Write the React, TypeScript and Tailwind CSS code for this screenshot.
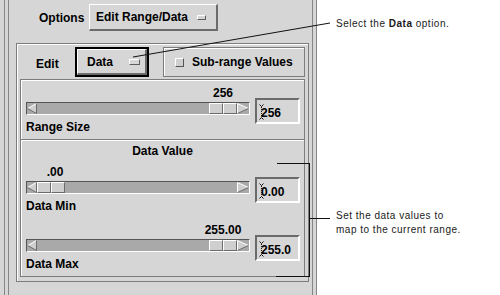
import React from 'react';

type SliderProps = {
  value: string;
  name: string;
  field: string;
  atMax?: boolean;
};

const Cursor = () => (
  <svg className="absolute left-[2px] top-[4px]" width="5" height="16" viewBox="0 0 5 16">
    <path d="M0.5 0.5 L2.5 2.5 L4.5 0.5" fill="none" stroke="#111" strokeWidth="1" />
    <path d="M2.5 3 V13" stroke="#111" strokeWidth="1" strokeDasharray="1 1" />
    <path d="M0.5 15.5 L2.5 13.5 L4.5 15.5" fill="none" stroke="#111" strokeWidth="1" />
  </svg>
);

const LeftArrow = () => (
  <svg width="10" height="11" viewBox="0 0 10 11" className="shrink-0">
    <polygon points="0.5,5.5 9.5,0.5 9.5,10.5" fill="#cfcfcf" />
    <path d="M9.5 0.5 L0.5 5.5" stroke="#ffffff" strokeWidth="1" />
    <path d="M0.5 5.5 L9.5 10.5 V0.5" fill="none" stroke="#6b6b6b" strokeWidth="1" />
  </svg>
);

const RightArrow = () => (
  <svg width="12" height="11" viewBox="0 0 12 11" className="shrink-0">
    <polygon points="0.5,0.5 11.5,5.5 0.5,10.5" fill="#cfcfcf" />
    <path d="M0.5 10.5 V0.5 L11.5 5.5" fill="none" stroke="#ffffff" strokeWidth="1" />
    <path d="M11.5 5.5 L0.5 10.5" stroke="#6b6b6b" strokeWidth="1" />
  </svg>
);

const Thumb = () => (
  <div className="flex shrink-0 h-full">
    <div className="w-[14px] h-full bg-[#cfcfcf] border border-t-white border-l-white border-b-[#6b6b6b] border-r-[#6b6b6b]" />
    <div className="w-[14px] h-full bg-[#cfcfcf] border border-t-white border-l-white border-b-[#6b6b6b] border-r-[#6b6b6b]" />
  </div>
);

const Slider: React.FC<SliderProps> = ({ value, name, field, atMax = false }) => (
  <div className="flex items-start pl-[5px]">
    <div className="w-[224px]">
      <div className={`flex h-[14px] leading-[14px] ${atMax ? 'justify-end' : 'justify-start'}`}>
        <span className={atMax ? 'w-[54px] text-center' : 'w-[58px] text-center'}>{value}</span>
      </div>
      <div className="mt-[2px] h-[13px] flex bg-[#a9a9a9] border border-t-[#555555] border-l-[#555555] border-b-white border-r-white">
        <LeftArrow />
        {atMax && <div className="flex-1" />}
        <Thumb />
        {!atMax && <div className="flex-1" />}
        <RightArrow />
      </div>
      <div className="mt-[5px] h-[14px] leading-[14px]">{name}</div>
    </div>
    <div className="relative ml-[5px] mt-[12px] w-[45px] h-[26px] flex items-center pl-[4px] border-2 border-t-[#6b6b6b] border-l-[#6b6b6b] border-b-white border-r-white">
      <Cursor />
      <span className="mt-[3px] leading-[14px]">{field}</span>
    </div>
  </div>
);

export default function App() {
  return (
    <div className="relative flex w-[500px] h-[295px] bg-white overflow-hidden font-['Liberation_Sans',Arial,sans-serif] text-black">
      <div className="w-[317px] h-full shrink-0 bg-[#d6d6d6] pl-[4px]">
        <div className="w-[313px] h-full border-x border-[#858585] px-[3px]">
          <div className="h-full border-x border-[#858585] text-[12px] font-bold">
            <div className="flex items-center pt-[4px]">
              <div className="w-[80px] pl-[30px] leading-[14px]">Options</div>
              <div className="w-[129px] h-[27px] flex items-center justify-between pl-[6px] pr-[10px] border-t border-l border-t-white border-l-white border-b-2 border-r-2 border-b-[#6b6b6b] border-r-[#6b6b6b]">
                <span className="leading-[14px]">Edit Range/Data</span>
                <div className="w-[9px] h-[5px] border border-t-white border-l-white border-b-[#5e5e5e] border-r-[#5e5e5e]" />
              </div>
            </div>

            <div className="ml-[7px] mt-[12px] w-[293px] px-[3px] pb-[4px] border border-[#7c7c7c] shadow-[inset_1px_1px_0_#ffffff]">
              <div className="flex h-[30px] mt-[3px] -ml-[3px]">
                <div className="w-[58px] pl-[19px] pt-[3px] flex items-center leading-[14px]">Edit</div>
                <div className="w-[74px] h-full border-2 border-black">
                  <div className="h-full flex items-center justify-between pl-[9px] pr-[5px] border-t border-l border-t-white border-l-white border-b-2 border-r-2 border-b-[#6b6b6b] border-r-[#6b6b6b]">
                    <span className="leading-[14px]">Data</span>
                    <div className="w-[11px] h-[6px] border border-t-white border-l-white border-b-[#5e5e5e] border-r-[#5e5e5e]" />
                  </div>
                </div>
                <div className="ml-[14px] w-[142px] h-full flex items-center pl-[11px] border border-[#7c7c7c] shadow-[inset_1px_1px_0_#ffffff]">
                  <div className="w-[9px] h-[9px] bg-[#cfcfcf] border border-t-white border-l-white border-b-[#555555] border-r-[#555555]" />
                  <span className="ml-[8px] leading-[14px]">Sub-range Values</span>
                </div>
              </div>

              <div className="mt-[2px] w-[285px] border border-[#7c7c7c] shadow-[inset_1px_1px_0_#ffffff]">
                <div className="pt-[6px] pb-[5px]">
                  <Slider value="256" name="Range Size" field="256" atMax />
                </div>
                <div className="h-px bg-[#7c7c7c]" />
                <div className="h-px bg-white" />
                <div className="pt-[3px] pb-[5px]">
                  <div className="h-[14px] leading-[14px] text-center">Data Value</div>
                  <div className="mt-[7px]">
                    <Slider value=".00" name="Data Min" field="0.00" />
                  </div>
                  <div className="mt-[10px]">
                    <Slider value="255.00" name="Data Max" field="255.0" atMax />
                  </div>
                </div>
              </div>
            </div>
          </div>
        </div>
      </div>

      <div className="flex-1 pl-[19px] pt-[17px] text-[10px] leading-[14px] tracking-[0.5px] text-[#1a1a1a]">
        <div>
          Select the <span className="font-bold">Data</span> option.
        </div>
        <div className="mt-[178px]">
          Set the data values to
          <br />
          map to the current range.
        </div>
      </div>

      <svg className="absolute left-0 top-0 pointer-events-none" width="500" height="295" viewBox="0 0 500 295">
        <line x1="133" y1="57" x2="330" y2="23" stroke="#111" strokeWidth="1" />
        <path d="M277 163.5 H309.5 V276.5 H276" fill="none" stroke="#111" strokeWidth="1" shapeRendering="crispEdges" />
        <path d="M309.5 218.5 H330" fill="none" stroke="#111" strokeWidth="1" shapeRendering="crispEdges" />
      </svg>
    </div>
  );
}
